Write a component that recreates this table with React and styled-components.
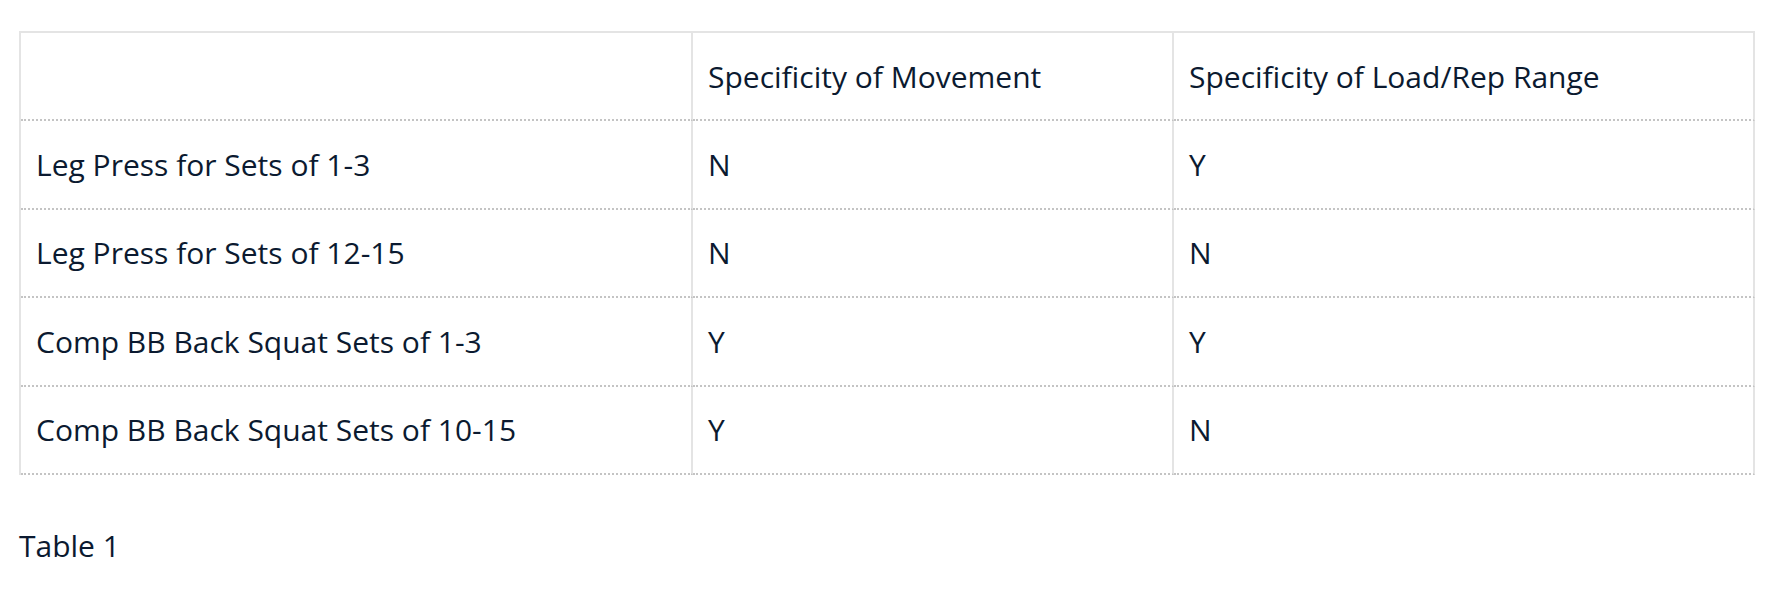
import React from "react";
import styled, { createGlobalStyle } from "styled-components";

const GlobalStyle = createGlobalStyle`
  html, body {
    margin: 0;
    padding: 0;
    background: #ffffff;
  }
  body {
    font-family: "Open Sans", "Noto Sans", sans-serif;
    color: #0b1a30;
  }
`;

const Page = styled.div`
  padding: 31px 0 0 19px;
`;

const Table = styled.table`
  width: 1736px;
  table-layout: fixed;
  border-collapse: separate;
  border-spacing: 0;
  border-top: 2px solid #e4e4e4;
  border-left: 2px solid #e4e4e4;
  font-size: 30px;
`;

const Col = styled.col`
  width: ${(p) => p.$w}px;
`;

const Cell = styled.td`
  box-sizing: border-box;
  height: 88.4px;
  padding: 0 15px;
  vertical-align: middle;
  text-align: left;
  font-weight: 400;
  border-right: 2px solid #e4e4e4;
  border-bottom: 2px dotted #c4c4c4;
  white-space: nowrap;
`;

const HeadCell = styled(Cell).attrs({ as: "th" })``;

const Caption = styled.p`
  margin: 48px 0 0;
  font-size: 30px;
  line-height: 1.5;
`;

const widths = [672, 481, 581];

const columns = ["", "Specificity of Movement", "Specificity of Load/Rep Range"];

const rows = [
  ["Leg Press for Sets of 1-3", "N", "Y"],
  ["Leg Press for Sets of 12-15", "N", "N"],
  ["Comp BB Back Squat Sets of 1-3", "Y", "Y"],
  ["Comp BB Back Squat Sets of 10-15", "Y", "N"],
];

export default function App() {
  return (
    <Page>
      <GlobalStyle />
      <Table>
        <colgroup>
          {widths.map((w, i) => (
            <Col key={i} $w={w} />
          ))}
        </colgroup>
        <thead>
          <tr>
            {columns.map((c, i) => (
              <HeadCell key={i}>{c}</HeadCell>
            ))}
          </tr>
        </thead>
        <tbody>
          {rows.map((r, i) => (
            <tr key={i}>
              {r.map((v, j) => (
                <Cell key={j}>{v}</Cell>
              ))}
            </tr>
          ))}
        </tbody>
      </Table>
      <Caption>Table 1</Caption>
    </Page>
  );
}
